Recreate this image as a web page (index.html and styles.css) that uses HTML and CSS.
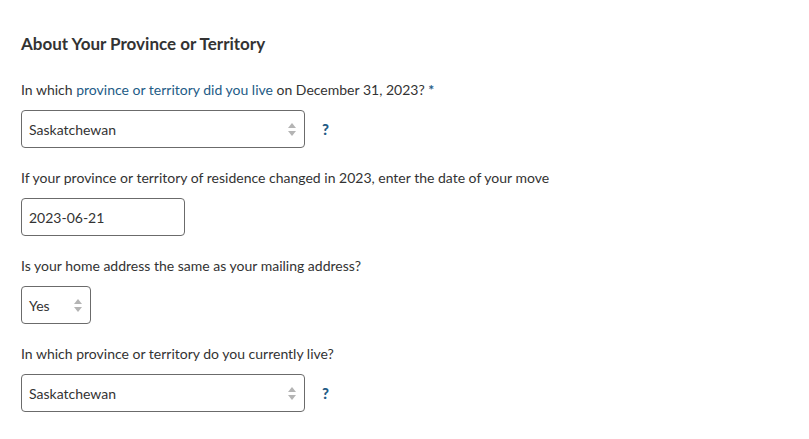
FILE: index.html
```html
<!DOCTYPE html>
<html lang="en">
<head>
<meta charset="utf-8">
<title>About Your Province or Territory</title>
<link rel="stylesheet" href="styles.css">
</head>
<body>
<main class="form">
  <h2 class="title">About Your Province or Territory</h2>

  <div class="field">
    <label class="label">In which <a class="link" href="#">province or territory did you live</a> on December 31, 2023? <span class="req">*</span></label>
    <div class="row">
      <div class="select wide"><span>Saskatchewan</span><svg class="arrows" width="8" height="13" viewBox="0 0 8 13"><path d="M4 0 L8 5 H0 Z" /><path d="M4 13 L8 8 H0 Z" /></svg></div>
      <span class="help">?</span>
    </div>
  </div>

  <div class="field first-gap">
    <label class="label">If your province or territory of residence changed in 2023, enter the date of your move</label>
    <div class="row">
      <div class="input date"><span>2023-06-21</span></div>
    </div>
  </div>

  <div class="field">
    <label class="label">Is your home address the same as your mailing address?</label>
    <div class="row">
      <div class="select small"><span>Yes</span><svg class="arrows" width="8" height="13" viewBox="0 0 8 13"><path d="M4 0 L8 5 H0 Z" /><path d="M4 13 L8 8 H0 Z" /></svg></div>
    </div>
  </div>

  <div class="field">
    <label class="label">In which province or territory do you currently live?</label>
    <div class="row">
      <div class="select wide"><span>Saskatchewan</span><svg class="arrows" width="8" height="13" viewBox="0 0 8 13"><path d="M4 0 L8 5 H0 Z" /><path d="M4 13 L8 8 H0 Z" /></svg></div>
      <span class="help">?</span>
    </div>
  </div>
</main>
</body>
</html>
```

FILE: styles.css
```css
html, body {
  margin: 0;
  padding: 0;
  background: #ffffff;
}
body {
  font-family: "Lato", "Liberation Sans", sans-serif;
  color: #333333;
}
.form {
  padding: 33px 0 0 21px;
}
.title {
  margin: 0 0 25px 0;
  font-size: 17px;
  line-height: 22px;
  font-weight: 700;
  color: #333333;
}
.field {
  margin-bottom: 20px;
}
.first-gap {
  margin-top: 1px;
}
.label {
  display: block;
  font-size: 14px;
  line-height: 20px;
  color: #333333;
  margin-bottom: 10px;
}
.link {
  color: #235b86;
  text-decoration: none;
}
.req {
  color: #235b86;
  font-weight: 700;
}
.row {
  display: flex;
  align-items: center;
}
.select, .input {
  box-sizing: border-box;
  height: 38px;
  border: 1px solid #6b6b6b;
  border-radius: 4px;
  display: flex;
  align-items: center;
  justify-content: space-between;
  padding: 0 8px 0 7px;
  font-size: 14px;
  color: #333333;
}
.wide { width: 284px; }
.small { width: 70px; }
.date { width: 164px; }
.arrows { fill: #b4b4b4; }
.help {
  margin-left: 17px;
  font-size: 15px;
  font-weight: 900;
  color: #235b86;
}
```
